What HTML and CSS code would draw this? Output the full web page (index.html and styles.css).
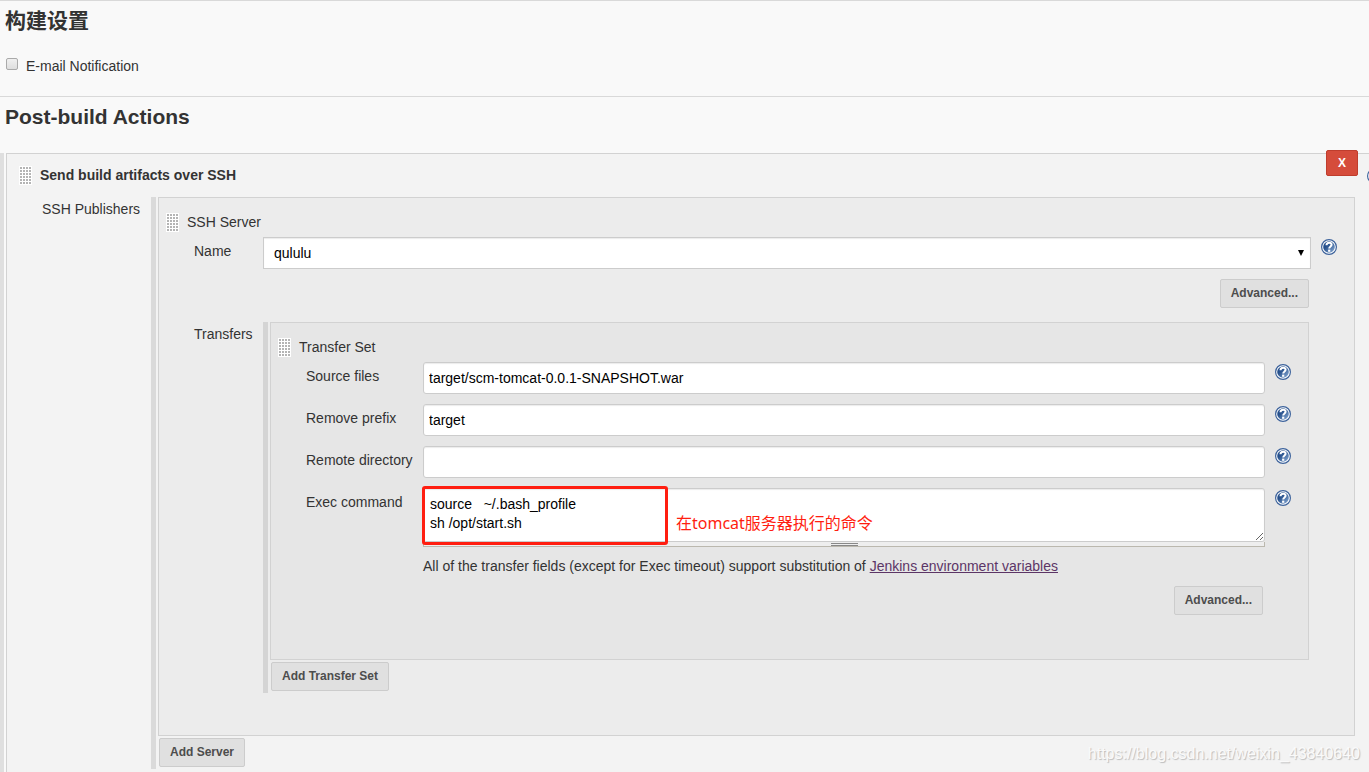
FILE: index.html
```html
<!DOCTYPE html>
<html lang="zh-CN">
<head>
<meta charset="utf-8">
<title>Post-build Actions</title>
<link rel="stylesheet" href="styles.css">
</head>
<body>
<svg class="defs" width="0" height="0" aria-hidden="true">
  <defs>
    <linearGradient id="disc" x1="0" y1="0" x2="1" y2="1">
      <stop offset="0.35" stop-color="#26508c"/>
      <stop offset="1" stop-color="#8fb0d8"/>
    </linearGradient>
    <symbol id="help" viewBox="0 0 16 16">
      <circle cx="8" cy="8" r="7.4" fill="#fff" stroke="#3c629b" stroke-width="1.2"/>
      <circle cx="8" cy="8" r="5.8" fill="url(#disc)"/>
      <path d="M5.5 6.2C5.5 4.4 6.6 3.7 8.1 3.7C9.6 3.7 10.6 4.6 10.6 5.8C10.6 7.5 8.2 7.4 8.2 9.6" fill="none" stroke="#fff" stroke-width="2"/>
      <rect x="7.1" y="10.6" width="2.2" height="2.2" fill="#fff"/>
    </symbol>
  </defs>
</svg>
<form class="page">
  <section class="section">
    <h2>构建设置</h2>
    <label class="check"><input type="checkbox"><span>E-mail Notification</span></label>
  </section>
  <section class="section grow">
    <h2>Post-build Actions</h2>
    <div class="list outer">
      <div class="panel publisher">
        <button type="button" class="remove">X</button>
        <button type="button" class="help edge" aria-label="Help"><svg><use href="#help"/></svg></button>
        <div class="head"><i class="grip"></i><strong>Send build artifacts over SSH</strong></div>
        <div class="nest ssh">
          <span class="label">SSH Publishers</span>
          <div class="list">
            <div class="panel server">
              <div class="head"><i class="grip"></i><span>SSH Server</span></div>
              <div class="fields server-fields">
                <label class="label" for="name">Name</label>
                <div class="select"><select id="name"><option>qululu</option></select><svg class="arrow" viewBox="0 0 6 6"><path d="M0 0H6L3 6Z"/></svg></div>
                <button type="button" class="help" aria-label="Help"><svg><use href="#help"/></svg></button>
              </div>
              <div class="actions"><button type="button" class="btn">Advanced...</button></div>
              <div class="nest transfers">
                <span class="label">Transfers</span>
                <div class="list">
                  <div class="panel transfer">
                    <div class="head"><i class="grip"></i><span>Transfer Set</span></div>
                    <div class="fields">
                      <label class="label" for="src">Source files</label>
                      <input id="src" class="text" type="text" value="target/scm-tomcat-0.0.1-SNAPSHOT.war">
                      <button type="button" class="help" aria-label="Help"><svg><use href="#help"/></svg></button>
                      <label class="label" for="prefix">Remove prefix</label>
                      <input id="prefix" class="text" type="text" value="target">
                      <button type="button" class="help" aria-label="Help"><svg><use href="#help"/></svg></button>
                      <label class="label" for="dir">Remote directory</label>
                      <input id="dir" class="text" type="text">
                      <button type="button" class="help" aria-label="Help"><svg><use href="#help"/></svg></button>
                      <label class="label" for="cmd">Exec command</label>
                      <div class="command">
                        <textarea id="cmd">source   ~/.bash_profile
sh /opt/start.sh</textarea>
                        <div class="drag"><i></i></div>
                        <div class="mark"></div>
                        <span class="note">在tomcat服务器执行的命令</span>
                      </div>
                      <button type="button" class="help" aria-label="Help"><svg><use href="#help"/></svg></button>
                      <p class="hint">All of the transfer fields (except for Exec timeout) support substitution of <a href="#">Jenkins environment variables</a></p>
                    </div>
                    <div class="actions"><button type="button" class="btn">Advanced...</button></div>
                  </div>
                  <button type="button" class="btn add">Add Transfer Set</button>
                </div>
              </div>
            </div>
            <button type="button" class="btn add">Add Server</button>
          </div>
        </div>
      </div>
    </div>
  </section>
</form>
<div class="watermark">https://blog.csdn.net/weixin_43840640</div>
</body>
</html>
```
FILE: styles.css
```css
* { box-sizing: border-box; }

body {
  margin: 0;
  overflow: hidden;
  background: #f9f9f9;
  color: #333;
  font: 14px/20px "Liberation Sans", "Noto Sans CJK SC", sans-serif;
}

button, input, select, textarea { font: inherit; }

.defs { position: absolute; }

.page {
  display: flex;
  flex-direction: column;
  min-height: 100vh;
}

.section {
  border-top: 1px solid #d9d9d9;
  padding-top: 5px;
}

.section h2 {
  margin: 0 0 0 5px;
  font-size: 21px;
  line-height: 30px;
}

.grow {
  flex: 1;
  display: flex;
  flex-direction: column;
}

.check {
  display: flex;
  align-items: flex-start;
  gap: 8px;
  margin: 20px 0 20px 6px;
}

.check input {
  appearance: none;
  width: 12px;
  height: 12px;
  margin: 2px 0 0;
  border: 1px solid #aaa;
  border-radius: 2px;
  background: linear-gradient(#f0f0f0, #dedede);
}

/* Nested repeatable blocks, each marked by a bar on the left */
.list {
  flex: 1;
  min-width: 0;
  padding-left: 2px;
  padding-bottom: 2px;
  border-left: 5px solid rgba(0, 0, 0, 0.1);
}

.outer {
  display: flex;
  margin-top: 21px;
  padding-bottom: 0;
  border-left-width: 4px;
}

.panel {
  position: relative;
  border: 1px solid #d2d2d2;
}

.publisher {
  flex: 1;
  padding: 11px 14px 2px 12px;
  border-width: 1px 0 0 1px;
  background: #f3f3f3;
}

.server {
  padding: 14px 7px 42px;
  background: #ececec;
}

.transfer {
  padding: 14px 7px 44px;
  background: #e6e6e6;
}

.head {
  display: flex;
  align-items: center;
  gap: 8px;
  height: 20px;
}

.grip {
  width: 13px;
  height: 19px;
  background: #fff radial-gradient(circle at 2px 2px, #b4b4b4 1px, #fff 1px) 0 0 / 3px 3px;
}

.nest { display: flex; }

.ssh { margin: 12px 0 0 23px; }
.ssh > .label { width: 109px; }

.transfers { margin: 14px 38px 0 28px; }
.transfers > .label { width: 69px; }

.label { padding-top: 2px; }

.fields {
  display: grid;
  grid-template-columns: 107px 1fr 16px;
  column-gap: 10px;
  row-gap: 10px;
  margin: 5px 10px 0 28px;
}

.server-fields {
  grid-template-columns: 59px 1fr 16px;
}

.fields > .label { padding-top: 4px; }

.text, .select select, textarea {
  display: block;
  width: 100%;
  height: 32px;
  margin: 0;
  padding: 0 5px;
  border: 1px solid #ccc;
  border-radius: 3px;
  background: #fff;
  color: #000;
  box-shadow: inset 0 1px 1px rgba(0, 0, 0, 0.08);
}

.select { position: relative; }

.select select {
  appearance: none;
  padding: 0 10px;
  border-radius: 0;
}

.arrow {
  position: absolute;
  top: 13px;
  right: 7px;
  width: 6px;
  height: 6px;
  pointer-events: none;
}

.help {
  width: 16px;
  height: 16px;
  margin-top: 2px;
  padding: 0;
  border: 0;
  background: none;
}

.help svg {
  display: block;
  width: 16px;
  height: 16px;
}

.edge {
  position: absolute;
  top: 12px;
  right: -14px;
}

.remove {
  position: absolute;
  top: -4px;
  right: 11px;
  width: 32px;
  height: 26px;
  padding: 0 0 1px;
  border: 1px solid #bf3d2d;
  border-radius: 2px;
  background: #d54c3b;
  color: #fff;
  font-size: 12px;
  font-weight: bold;
}

.command { position: relative; }

textarea {
  height: 54px;
  padding: 6px;
  line-height: 19px;
  resize: vertical;
  overflow: hidden;
}

.drag {
  display: flex;
  justify-content: center;
  align-items: center;
  height: 5px;
  border: 1px solid #bbb8ae;
  border-top: 0;
  background: #eee;
}

.drag i {
  width: 27px;
  height: 3px;
  border: 1px solid #888;
  border-width: 1px 0;
}

.mark {
  position: absolute;
  top: -2px;
  left: -1px;
  width: 246px;
  height: 59px;
  border: 3px solid #ff1e10;
  border-radius: 3px;
  pointer-events: none;
}

.note {
  position: absolute;
  top: 23px;
  left: 253px;
  color: #ff1e10;
  font: 16px/24px "Noto Sans", "Noto Sans CJK SC", sans-serif;
  white-space: nowrap;
  pointer-events: none;
}

.hint {
  grid-column: 2 / -1;
  margin: 0;
  padding-bottom: 1px;
  line-height: 18px;
}

.hint a { color: #5c3566; }

.actions {
  display: flex;
  justify-content: flex-end;
  margin: 10px 38px 0 0;
}

.btn {
  display: block;
  height: 29px;
  padding: 0 10px 2px;
  border: 1px solid #ccc;
  border-radius: 2px;
  background: #e0e0e0;
  color: #4d4d4d;
  font-size: 12px;
  font-weight: bold;
}

.add { margin: 2px 0 0 1px; }

.watermark {
  position: absolute;
  right: 9px;
  bottom: 8px;
  color: #fafafa;
  font-size: 16px;
  text-shadow: 1px 1px 1px #bbb;
}
```
